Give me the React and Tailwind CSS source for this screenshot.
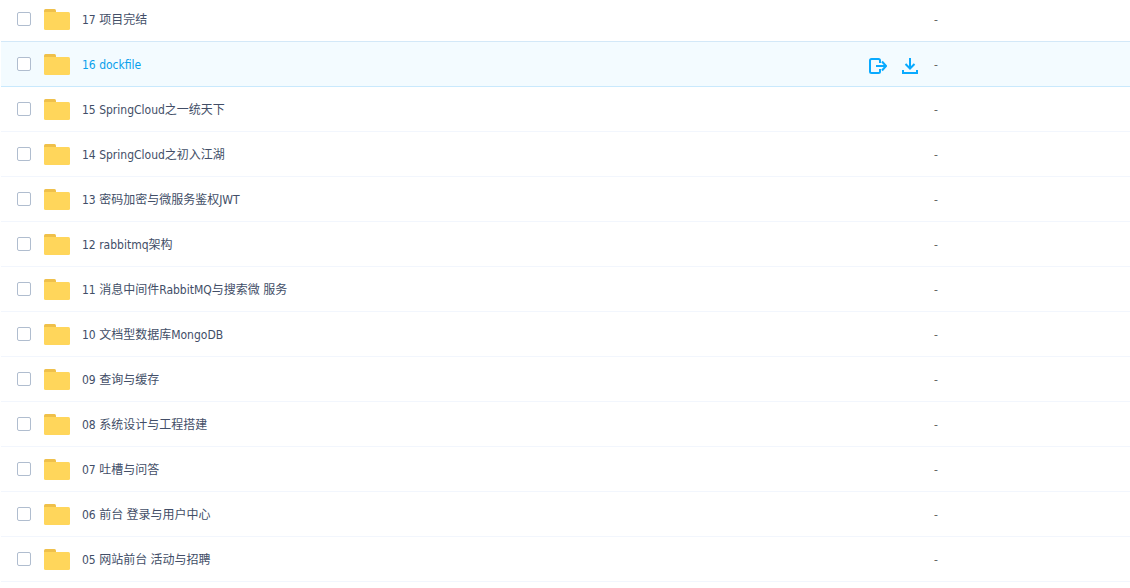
import { useState } from 'react'

const FOLDERS = [
  { id: 17, name: '17 项目完结' },
  { id: 16, name: '16 dockfile' },
  { id: 15, name: '15 SpringCloud之一统天下' },
  { id: 14, name: '14 SpringCloud之初入江湖' },
  { id: 13, name: '13 密码加密与微服务鉴权JWT' },
  { id: 12, name: '12 rabbitmq架构' },
  { id: 11, name: '11 消息中间件RabbitMQ与搜索微 服务' },
  { id: 10, name: '10 文档型数据库MongoDB' },
  { id: 9, name: '09 查询与缓存' },
  { id: 8, name: '08 系统设计与工程搭建' },
  { id: 7, name: '07 吐槽与问答' },
  { id: 6, name: '06 前台 登录与用户中心' },
  { id: 5, name: '05 网站前台 活动与招聘' },
]

function FolderIcon() {
  return (
    <svg width="26" height="21" viewBox="0 0 26 21" className="shrink-0" aria-hidden="true">
      <path d="M0 5V1.5Q0 0 1.5 0H10.5Q12 0 12 1.5V5Z" fill="#efc04a" />
      <path d="M0 3H24.5Q26 3 26 4.5V19.5Q26 21 24.5 21H1.5Q0 21 0 19.5Z" fill="#ffd65b" />
    </svg>
  )
}

function ShareIcon() {
  return (
    <svg width="18" height="16" viewBox="0 0 18 16" fill="none" stroke="currentColor" strokeWidth="2" aria-hidden="true">
      <path d="M11 5V2.5Q11 1 9.5 1H2.5Q1 1 1 2.5V13.5Q1 15 2.5 15H9.5Q11 15 11 13.5V11" />
      <path d="M7 8H17M13 3.5L17 8L13 12.5" />
    </svg>
  )
}

function DownloadIcon() {
  return (
    <svg width="16" height="16" viewBox="0 0 16 16" fill="none" stroke="currentColor" strokeWidth="2" aria-hidden="true">
      <path d="M8 0V10.5M3.5 6L8 10.5L12.5 6" />
      <path d="M1 12V15H15V12" />
    </svg>
  )
}

function FolderRow({ folder, active, aboveActive, checked, onToggle, onHover }) {
  const border = active ? 'border-[#c9e9fd]' : aboveActive ? 'border-[#d3e8f8]' : 'border-[#f2f6fd]'
  const cell = `h-[45px] border-b p-0 ${border}`

  return (
    <tr className={active ? 'bg-[#f3fbff]' : 'bg-white'} onMouseEnter={onHover}>
      <td className={cell}>
        <div className="flex items-center pl-4">
          <input
            id={`folder-${folder.id}`}
            type="checkbox"
            checked={checked}
            onChange={onToggle}
            className="size-[14px] shrink-0 appearance-none rounded-xs border border-[#b0bdcf] bg-white checked:bg-[#09aaff]"
          />
          <label htmlFor={`folder-${folder.id}`} className="flex items-center gap-3 pl-[13px]">
            <FolderIcon />
            <span className={`pt-0.5 ${active ? 'text-[#09a0ec]' : 'text-[#424e67]'}`}>{folder.name}</span>
          </label>
          {active && (
            <div className="ml-auto flex gap-[15px] pr-4 pt-[3px] text-[#09aaff]">
              <button type="button" aria-label="分享">
                <ShareIcon />
              </button>
              <button type="button" aria-label="下载">
                <DownloadIcon />
              </button>
            </div>
          )}
        </div>
      </td>
      <td className={`${cell} text-[#666666]`}>
        <div className="pt-0.5">-</div>
      </td>
    </tr>
  )
}

export default function App() {
  const [activeId, setActiveId] = useState(16)
  const [selected, setSelected] = useState([])

  const toggle = (id) => {
    setSelected((prev) => (prev.includes(id) ? prev.filter((item) => item !== id) : [...prev, id]))
  }

  return (
    <main className="overflow-hidden bg-white pl-px font-['DejaVu_Sans_Condensed','Noto_Sans_CJK_SC',sans-serif] text-[12px] leading-4">
      {/* the list is scrolled slightly past its first row */}
      <table className="-mt-[3px] w-full table-fixed border-separate border-spacing-0">
        <colgroup>
          <col />
          <col className="w-[196px]" />
        </colgroup>
        <tbody>
          {FOLDERS.map((folder, index) => (
            <FolderRow
              key={folder.id}
              folder={folder}
              active={folder.id === activeId}
              aboveActive={FOLDERS[index + 1]?.id === activeId}
              checked={selected.includes(folder.id)}
              onToggle={() => toggle(folder.id)}
              onHover={() => setActiveId(folder.id)}
            />
          ))}
        </tbody>
      </table>
    </main>
  )
}
